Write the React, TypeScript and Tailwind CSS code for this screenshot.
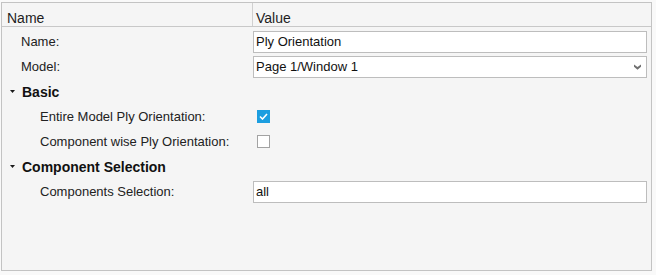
import React from "react";

const font = { fontFamily: '"Liberation Sans", Arial, sans-serif' };

function Caret() {
  return (
    <svg width="5" height="3" viewBox="0 0 5 3" className="shrink-0">
      <polygon points="0,0 5,0 2.5,3" fill="#1a1a1a" />
    </svg>
  );
}

function Check({ on }: { on: boolean }) {
  if (!on) return <div className="w-[13px] h-[13px] border border-[#a3a3a3] bg-white" />;
  return (
    <div className="w-[13px] h-[13px] bg-[#1c9ee0] flex items-center justify-center">
      <svg width="9" height="7" viewBox="0 0 9 7">
        <path d="M1 3.5 L3.5 6 L8 1" stroke="white" strokeWidth="1.6" fill="none" />
      </svg>
    </div>
  );
}

function Row({ label, indent, children }: { label: string; indent: string; children: React.ReactNode }) {
  return (
    <div className="flex h-[25px] items-center">
      <div className={`w-[251px] shrink-0 ${indent} text-[13px] text-[#222] pt-[1px]`}>{label}</div>
      <div className="flex-1 pr-[4px] flex items-center">{children}</div>
    </div>
  );
}

function TextBox({ value }: { value: string }) {
  return (
    <div className="w-[394px] h-[22px] border border-[#bdbdbd] bg-white pl-[2px] text-[13px] text-[#111] flex items-center pt-[1px]">
      {value}
    </div>
  );
}

export default function App() {
  return (
    <div className="w-[656px] h-[275px] bg-[#f9f9f9] pt-[2px] pl-[1px]" style={font}>
      <div className="w-[651px] h-[269px] border border-[#c3c3c3] bg-[#f5f5f5]">
        {/* header */}
        <div className="flex h-[24px] border-b border-[#c8c8c8]">
          <div className="w-[251px] border-r border-[#d0d0d0] pl-[5px] pt-[7px] leading-[16px] text-[14px] text-[#1e1e1e]">Name</div>
          <div className="pl-[3px] pt-[7px] leading-[16px] text-[14px] text-[#1e1e1e]">Value</div>
        </div>

        <div className="pt-[2px]">
          <Row label="Name:" indent="pl-[19px]">
            <TextBox value="Ply Orientation" />
          </Row>
          <Row label="Model:" indent="pl-[19px]">
            <div className="w-[394px] h-[22px] border border-[#bdbdbd] bg-white pl-[2px] pr-[5px] text-[13px] text-[#111] flex items-center justify-between pt-[1px]">
              <span>Page 1/Window 1</span>
              <svg width="7" height="6" viewBox="0 0 7 6">
                <path d="M0 0.5 L3.5 3 L7 0.5 L7 2.8 L3.5 5.8 L0 2.8 Z" fill="#707070" />
              </svg>
            </div>
          </Row>

          <div className="flex h-[25px] items-center pl-[8px] gap-[7px]">
            <Caret />
            <span className="text-[14px] font-bold text-[#111] pt-[1px]">Basic</span>
          </div>
          <Row label="Entire Model Ply Orientation:" indent="pl-[38px]">
            <div className="pl-[4px]"><Check on={true} /></div>
          </Row>
          <Row label="Component wise Ply Orientation:" indent="pl-[38px]">
            <div className="pl-[4px]"><Check on={false} /></div>
          </Row>

          <div className="flex h-[25px] items-center pl-[8px] gap-[7px]">
            <Caret />
            <span className="text-[14px] font-bold text-[#111] pt-[1px]">Component Selection</span>
          </div>
          <Row label="Components Selection:" indent="pl-[38px]">
            <TextBox value="all" />
          </Row>
        </div>
      </div>
    </div>
  );
}
